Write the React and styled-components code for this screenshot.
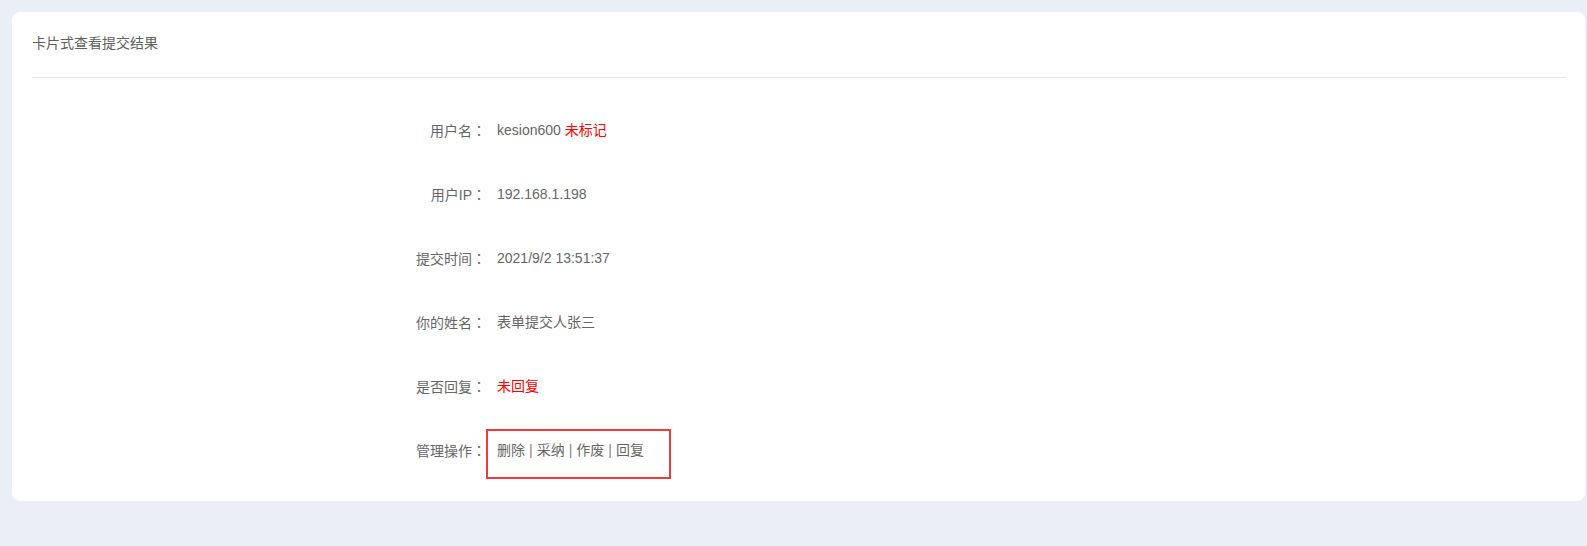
import styled, { createGlobalStyle } from 'styled-components'

const GlobalStyle = createGlobalStyle`
  html, body {
    margin: 0;
    padding: 0;
    background: #eaeef6;
    font-family: "Liberation Sans", "Noto Sans CJK SC", sans-serif;
    font-size: 14px;
    color: #666;
    text-spacing-trim: space-all;
  }
`

const Page = styled.div`
  padding: 12px 2px 44px 12px;
`

const Card = styled.div`
  background: #fff;
  border-radius: 8px;
  padding: 0 19px 19px 20px;
`

const CardHeader = styled.div`
  height: 66px;
  padding-top: 21px;
  line-height: 20px;
  box-sizing: border-box;
  border-bottom: 1px solid #e2e4e8;
  color: #5f5f5f;
  font-size: 14px;
`

const Form = styled.div`
  padding: 20px 0 0 354px;
`

const Row = styled.div`
  display: flex;
  align-items: center;
  height: 64px;
`

const Label = styled.div`
  width: 100px;
  text-align: right;
  line-height: 20px;
  color: #666;
`

const Colon = styled.span`
  font-family: "Noto Sans CJK TC", sans-serif;
`

const Value = styled.div`
  position: relative;
  margin-left: 11px;
  line-height: 20px;
  color: ${({ red }) => (red ? '#ff0000' : '#666')};
`

const Red = styled.span`
  color: #ff0000;
`

const Sep = styled.span`
  color: #7a7f90;
  margin: 0 4px;
`

const Op = styled.a`
  color: #666;
  text-decoration: none;
  cursor: pointer;
`

const Mark = styled.span`
  position: absolute;
  left: -11px;
  top: -11px;
  width: 185px;
  height: 50px;
  box-sizing: border-box;
  border: 2px solid #ef3b3b;
  pointer-events: none;
`

const rows = [
  { label: '用户名', value: <>kesion600 <Red>未标记</Red></> },
  { label: '用户IP', value: '192.168.1.198' },
  { label: '提交时间', value: '2021/9/2 13:51:37' },
  { label: '你的姓名', value: '表单提交人张三' },
  { label: '是否回复', value: '未回复', red: true },
]

const ops = ['删除', '采纳', '作废', '回复']

export default function App() {
  return (
    <Page>
      <GlobalStyle />
      <Card>
        <CardHeader>卡片式查看提交结果</CardHeader>
        <Form>
          {rows.map(r => (
            <Row key={r.label}>
              <Label>{r.label}<Colon>：</Colon></Label>
              <Value red={r.red}>{r.value}</Value>
            </Row>
          ))}
          <Row>
            <Label>管理操作<Colon>：</Colon></Label>
            <Value>
              {ops.map((o, i) => (
                <span key={o}>
                  {i > 0 && <Sep>|</Sep>}
                  <Op>{o}</Op>
                </span>
              ))}
              <Mark />
            </Value>
          </Row>
        </Form>
      </Card>
    </Page>
  )
}
